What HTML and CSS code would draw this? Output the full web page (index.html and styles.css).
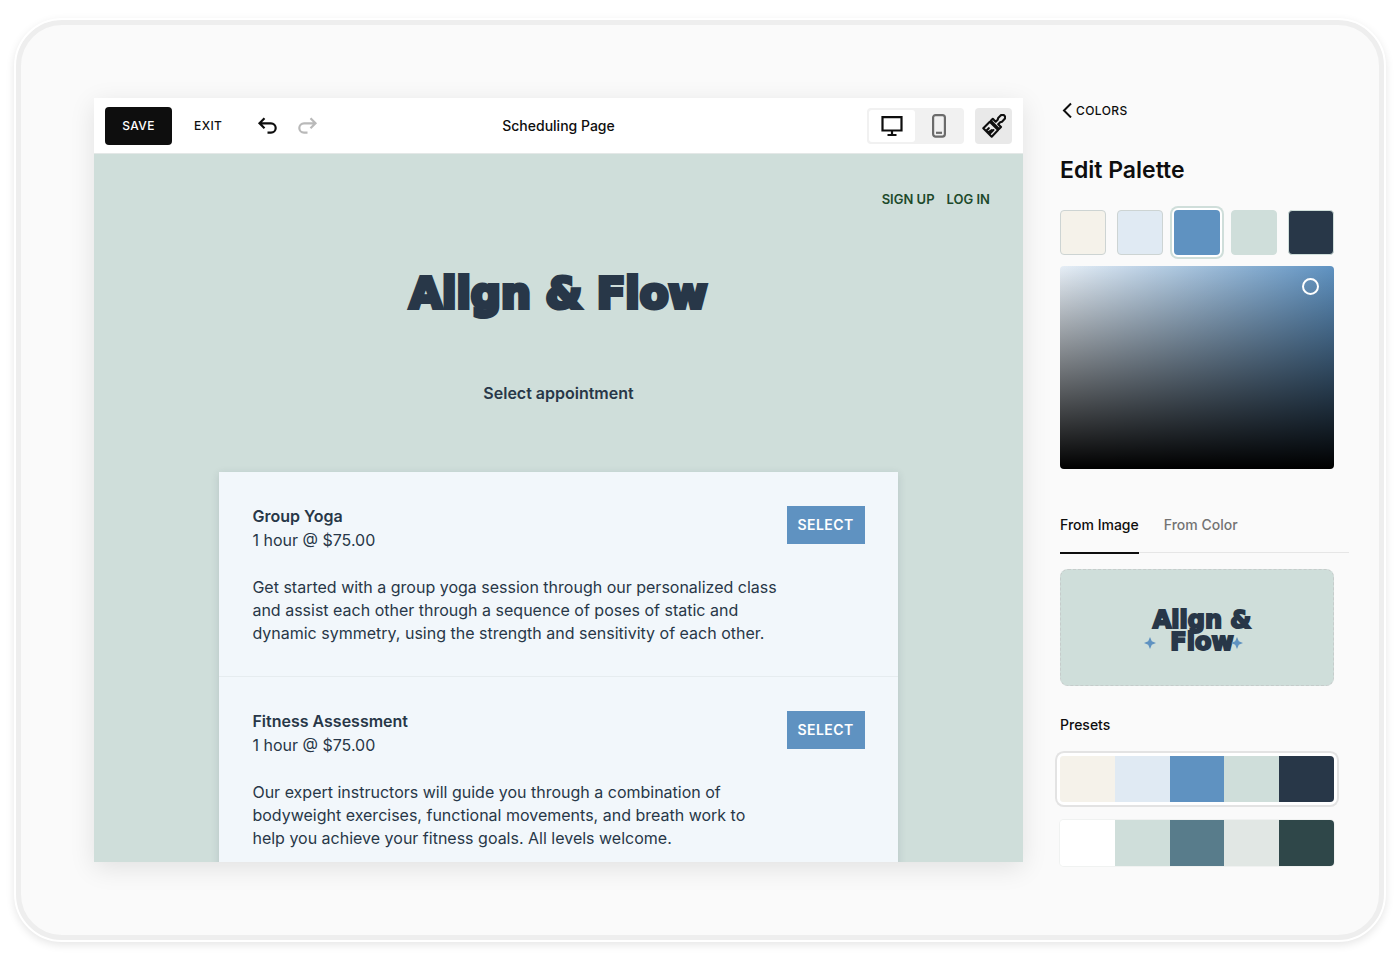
FILE: index.html
```html
<!DOCTYPE html>
<html lang="en">
<head>
<meta charset="utf-8">
<meta name="viewport" content="width=device-width, initial-scale=1">
<title>Scheduling Page – Edit Palette</title>
<link rel="stylesheet" href="styles.css">
</head>
<body>
<div class="device">
  <main class="editor">
    <header class="toolbar">
      <div class="toolbar-left">
        <button class="btn-save" type="button">SAVE</button>
        <button class="btn-exit" type="button">EXIT</button>
        <button class="btn-icon" type="button" aria-label="Undo">
          <svg width="20" height="18" viewBox="0 0 20 18" fill="none" stroke="#0e0e0e" stroke-width="2.200"><path d="M7.500 1.300 2.500 6.300l5 5M2.500 6.300H14a4.700 4.700 0 0 1 0 9.400H10.500"/></svg>
        </button>
        <button class="btn-icon" type="button" aria-label="Redo" disabled>
          <svg width="20" height="18" viewBox="0 0 20 18" fill="none" stroke="#b9b9b9" stroke-width="2.200"><path d="M12.500 1.300l5 5-5 5M17.500 6.300H6a4.700 4.700 0 0 0 0 9.400H9.500"/></svg>
        </button>
      </div>
      <h1 class="toolbar-title">Scheduling Page</h1>
      <div class="toolbar-right">
        <div class="device-switch">
          <button class="switch-option is-active" type="button" aria-label="Desktop">
            <svg width="22" height="20" viewBox="0 0 22 20" fill="none" stroke="#0e0e0e" stroke-width="2.200"><path d="M1.500 1.200H20.500V14.500H1.500ZM11 14.500V19M6.500 19h9"/></svg>
          </button>
          <button class="switch-option" type="button" aria-label="Mobile">
            <svg width="14" height="24" viewBox="0 0 14 24" fill="none" stroke="#6b6b6b" stroke-width="2.200"><rect x="1.100" y="1.100" width="11.800" height="21.500" rx="2.500"/><path d="M4 18.800h6"/></svg>
          </button>
        </div>
        <button class="btn-brush" type="button" aria-label="Styles">
          <svg width="24" height="24" viewBox="0 0 24 24" fill="none" stroke="#0e0e0e" stroke-width="2.100" stroke-linejoin="round" stroke-linecap="round"><path d="M8.800 6.800 10.800 4.800 13.700 7.700 15.700 5.700 16.200 3.900 18.600 1.600a2.400 2.400 0 0 1 3.700 3.700L20 7.700 18.200 8.200 16.200 10.200 19 13 17 15ZM7.800 7.800 1.300 14.300 9.700 22.700 16.100 16.100ZM4 17 6.800 14.200M5.600 18.600 9.800 16.200M7.200 20.200 11.400 16"/></svg>
        </button>
      </div>
    </header>
    <div class="page">
      <nav class="page-nav">
        <a href="#signup">SIGN UP</a>
        <a href="#login">LOG IN</a>
      </nav>
      <h2 class="brand">Align &amp; Flow</h2>
      <p class="page-prompt">Select appointment</p>
      <div class="services">
        <article class="service">
          <div class="service-head">
            <div>
              <h3>Group Yoga</h3>
              <p>1 hour @ $75.00</p>
            </div>
            <button class="btn-select" type="button">SELECT</button>
          </div>
          <p class="service-text">Get started with a group yoga session through our personalized class<br>and assist each other through a sequence of poses of static and<br>dynamic symmetry, using the strength and sensitivity of each other.</p>
        </article>
        <article class="service">
          <div class="service-head">
            <div>
              <h3>Fitness Assessment</h3>
              <p>1 hour @ $75.00</p>
            </div>
            <button class="btn-select" type="button">SELECT</button>
          </div>
          <p class="service-text">Our expert instructors will guide you through a combination of<br>bodyweight exercises, functional movements, and breath work to<br>help you achieve your fitness goals. All levels welcome.</p>
        </article>
      </div>
    </div>
  </main>

  <aside class="panel">
    <a class="back" href="#colors">
      <svg width="10" height="16" viewBox="0 0 10 16" fill="none" stroke="#0e0e0e" stroke-width="2"><path d="M9 1.500 2 8.500l7 7"/></svg>
      <span>COLORS</span>
    </a>
    <h2 class="panel-title">Edit Palette</h2>
    <div class="swatches">
      <button class="swatch cream" type="button" aria-label="Cream"></button>
      <button class="swatch ice" type="button" aria-label="Ice"></button>
      <button class="swatch blue is-selected" type="button" aria-label="Blue"></button>
      <button class="swatch sage" type="button" aria-label="Sage"></button>
      <button class="swatch navy" type="button" aria-label="Navy"></button>
    </div>
    <div class="picker"><span class="picker-handle"></span></div>
    <div class="tabs" role="tablist">
      <button class="tab is-active" type="button" role="tab" aria-selected="true">From Image</button>
      <button class="tab" type="button" role="tab" aria-selected="false">From Color</button>
    </div>
    <div class="image-card">
      <div class="mini-logo">
        <p>Align &amp;<br>Flow</p>
        <svg class="spark spark-left" width="12" height="12" viewBox="0 0 12 12" fill="#5f92c1"><path d="M6 0 7.800 4.200 12 6 7.800 7.800 6 12 4.200 7.800 0 6 4.200 4.200Z"/></svg>
        <svg class="spark spark-right" width="12" height="12" viewBox="0 0 12 12" fill="#5f92c1"><path d="M6 0 7.800 4.200 12 6 7.800 7.800 6 12 4.200 7.800 0 6 4.200 4.200Z"/></svg>
      </div>
    </div>
    <h3 class="presets-title">Presets</h3>
    <div class="presets">
      <button class="preset is-selected" type="button" aria-label="Preset 1"><i class="cream"></i><i class="ice"></i><i class="blue"></i><i class="sage"></i><i class="navy"></i></button>
      <button class="preset" type="button" aria-label="Preset 2"><i class="white"></i><i class="sage"></i><i class="teal"></i><i class="mist"></i><i class="forest"></i></button>
    </div>
  </aside>
</div>
</body>
</html>
```
FILE: styles.css
```css
* { box-sizing: border-box; }
body {
  margin: 0;
  min-height: 100vh;
  padding: 20px 16px;
  display: flex;
  background: #fff;
  color: #0e0e0e;
  font-family: Inter, "Liberation Sans", sans-serif;
}
h1, h2, h3, p { margin: 0; }
button { margin: 0; padding: 0; border: 0; background: none; font: inherit; color: inherit; cursor: pointer; }
a { color: inherit; text-decoration: none; }
svg { display: block; flex: none; }

.cream { background: #f5f2ea; }
.ice { background: #e0eaf3; }
.blue { background: #5f92c1; }
.sage { background: #cfdeda; }
.navy { background: #283748; }
.white { background: #fff; }
.teal { background: #587c8b; }
.mist { background: #e1e7e4; }
.forest { background: #2f4749; }

.device {
  flex: 1;
  display: grid;
  grid-template-columns: minmax(0, 1fr) 289px;
  align-items: start;
  gap: 37px;
  padding: 73px 30px 69px 73px;
  border: 5px solid #eee;
  border-radius: 46px;
  background: #fafafa;
  outline: 2px solid #fff;
  box-shadow: 0 3px 8px 2px rgba(0, 0, 0, .1);
}

/* Editor */
.editor {
  display: flex;
  flex-direction: column;
  height: 764px;
  overflow: hidden;
  box-shadow: 0 6px 24px rgba(0, 0, 0, .1);
}
.toolbar {
  display: grid;
  grid-template-columns: 1fr auto 1fr;
  align-items: center;
  flex: none;
  height: 56px;
  padding: 0 11px;
  border-bottom: 1px solid #e4e8e7;
  background: #fff;
}
.toolbar-left, .toolbar-right { display: flex; align-items: center; }
.toolbar-right { justify-content: flex-end; gap: 11px; }
.btn-save {
  width: 67px;
  height: 38px;
  border-radius: 4px;
  background: #0e0e0e;
  color: #fff;
}
.btn-save, .btn-exit, .back { font-size: 12px; font-weight: 500; letter-spacing: .4px; }
.btn-exit { margin: 0 35px 0 22px; }
.btn-icon + .btn-icon { margin-left: 21px; }
.toolbar-title { font-size: 14px; font-weight: 500; }
.device-switch { display: flex; padding: 2px; border-radius: 4px; background: #f1f1f1; }
.switch-option {
  width: 46px;
  height: 32px;
  border-radius: 3px;
  display: grid;
  place-items: center;
}
.switch-option.is-active { background: #fff; }
.switch-option + .switch-option { width: 47px; }
.btn-brush {
  width: 37px;
  height: 36px;
  border-radius: 4px;
  display: grid;
  place-items: center;
  background: #e9e9e9;
}

.page {
  flex: 1;
  display: flex;
  flex-direction: column;
  align-items: center;
  background: #cfdeda;
  color: #283748;
}
.page-nav {
  align-self: flex-end;
  display: flex;
  gap: 12px;
  padding: 36px 33px 0 0;
  color: #1d4a2b;
  font-size: 13px;
  line-height: 18px;
  font-weight: 600;
}
.brand {
  margin-top: 60px;
  font: 700 42px/52px "DejaVu Sans", Inter, sans-serif;
  -webkit-text-stroke: 4px #283748;
}
.page-prompt { margin-top: 61px; font-size: 16px; line-height: 24px; font-weight: 600; }
.services {
  width: 73%;
  margin-top: 67px;
  flex: 1;
  background: #f2f7fb;
  box-shadow: 0 2px 8px rgba(40, 55, 72, .15);
}
.service { height: 205px; padding: 32px 33px 0; font-size: 16px; line-height: 24px; }
.service:not(:last-child) { border-bottom: 1px solid #e6ecef; }
.service-head { display: flex; justify-content: space-between; align-items: flex-start; }
.service h3 { font-size: 16px; font-weight: 600; }
.service-text { margin-top: 24px; line-height: 23px; white-space: nowrap; }
.btn-select {
  width: 78px;
  height: 38px;
  margin-top: 2px;
  background: #5f92c1;
  color: #fff;
  font-size: 14px;
  font-weight: 600;
  letter-spacing: .4px;
}

/* Palette panel */
.panel { display: flex; flex-direction: column; }
.back { display: flex; align-items: center; gap: 4px; padding-left: 2px; height: 24px; }
.panel-title { margin-top: 32px; font-size: 23px; line-height: 32px; font-weight: 600; }
.swatches { display: flex; justify-content: space-between; width: 274px; margin-top: 24px; }
.swatch { width: 46px; height: 45px; border: 1px solid #cdd4d3; border-radius: 4px; }
.swatch.sage, .swatch.navy { border-color: #cfdeda; }
.swatch.is-selected { border: 0; box-shadow: 0 0 0 2px #fff, 0 0 0 4px #cfdeda; }
.picker {
  position: relative;
  width: 274px;
  height: 203px;
  margin-top: 11px;
  border-radius: 4px;
  background: linear-gradient(to top, #000, transparent), linear-gradient(to right, #e6eef6, #5f92c1);
}
.picker-handle {
  position: absolute;
  top: 12px;
  right: 15px;
  width: 17px;
  height: 17px;
  border: 2px solid #fff;
  border-radius: 50%;
}
.tabs { display: flex; gap: 25px; height: 45px; margin-top: 39px; border-bottom: 1px solid #e6e6e6; }
.tab { height: 46px; padding-bottom: 12px; font-size: 14px; font-weight: 500; color: #737373; border-bottom: 2px solid transparent; }
.tab.is-active { color: #0e0e0e; border-color: #0e0e0e; }
.image-card {
  display: grid;
  place-items: center;
  width: 274px;
  height: 117px;
  margin-top: 16px;
  border: 1px dashed #c6cccb;
  border-radius: 8px;
  background: #cfdeda;
}
.mini-logo {
  position: relative;
  margin: 6px 0 0 10px;
  color: #283748;
  font: 700 24px/22px "DejaVu Sans", Inter, sans-serif;
  text-align: center;
  -webkit-text-stroke: 2px #283748;
}
.spark { position: absolute; bottom: 4px; stroke: none; }
.spark-left { left: -9px; }
.spark-right { right: 8px; }
.presets-title { margin-top: 27px; font-size: 14px; line-height: 24px; font-weight: 500; }
.presets { display: flex; flex-direction: column; gap: 18px; width: 274px; margin-top: 19px; }
.preset { display: flex; height: 46px; border-radius: 4px; overflow: hidden; box-shadow: 0 0 0 1px #f0f2f1; }
.preset.is-selected { box-shadow: 0 0 0 3px #fff, 0 0 0 5px #e3e3e3; }
.preset i { flex: 1; height: 100%; }
```
